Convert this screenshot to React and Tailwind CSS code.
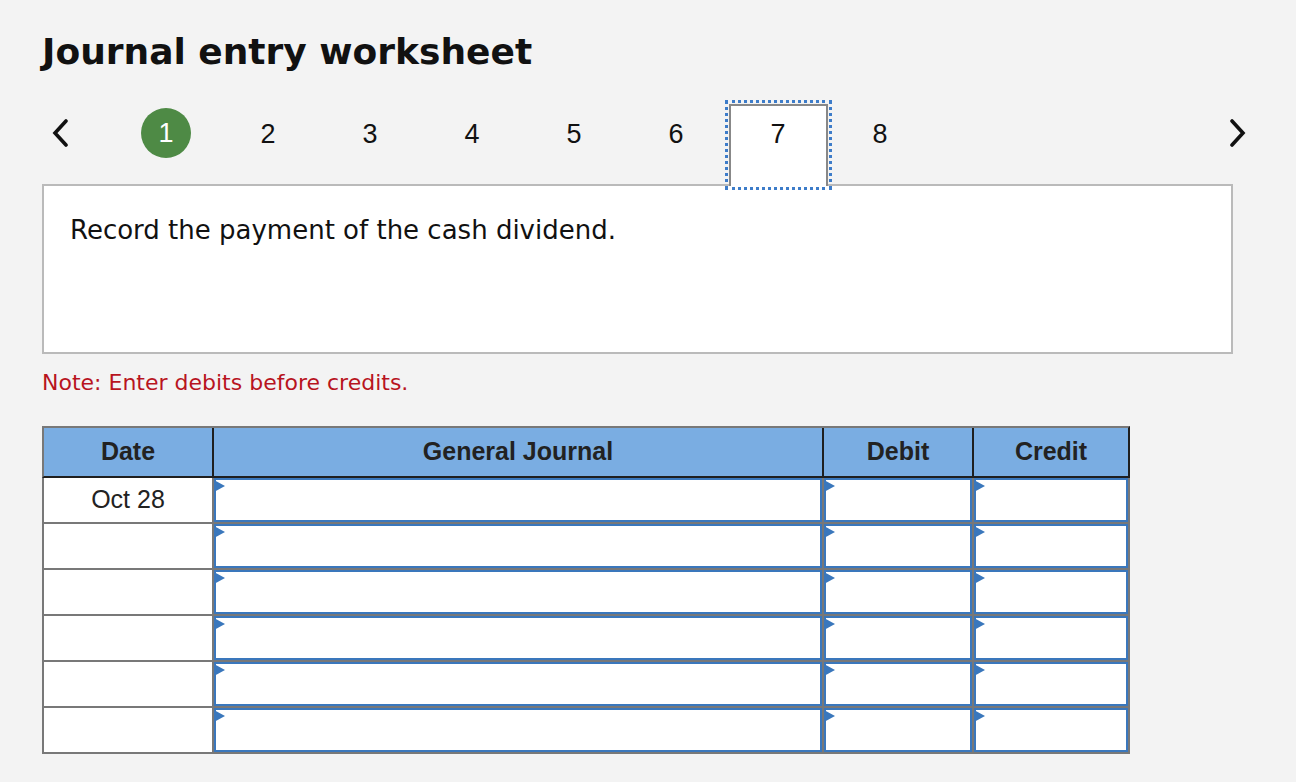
import React from "react";

const TABS = [1, 2, 3, 4, 5, 6, 7, 8];
const ROWS = ["Oct 28", "", "", "", "", ""];

function Chevron({ dir }) {
  // simple stroke chevron, 16x28
  const pts = dir === "left" ? "14,2 3,14 14,26" : "2,2 13,14 2,26";
  return (
    <svg width="16" height="28" viewBox="0 0 16 28" fill="none">
      <polyline points={pts} stroke="#111" strokeWidth="3.6" strokeLinecap="round" strokeLinejoin="miter" />
    </svg>
  );
}

function InputCell() {
  return (
    <div className="relative h-[44px] bg-white border-2 border-[#3a77bc]">
      <svg className="absolute left-[-2px] top-0" width="11" height="12" viewBox="0 0 11 12">
        <polygon points="0,0 11,6 0,12" fill="#3a77bc" />
      </svg>
    </div>
  );
}

export default function App() {
  return (
    <div className="min-h-screen bg-[#f3f3f3] px-[42px] pt-[30px] text-[#111]" style={{ fontFamily: '"DejaVu Sans", Verdana, sans-serif' }}>
      <h1 className="text-[36px] leading-[44px] font-bold text-[#111]">Journal entry worksheet</h1>

      {/* step tabs */}
      <div className="mt-[30px] h-[80px] w-[1204px] flex items-start" style={{ fontFamily: '"Liberation Sans", Arial, sans-serif' }}>
        <div className="w-[73px] pl-[10px] pt-[15px]">
          <Chevron dir="left" />
        </div>
        {TABS.map((n) => (
          <div key={n} className="w-[102px] h-[82px] flex justify-center">
            {n === 1 ? (
              <div className="mt-[4px] w-[50px] h-[50px] rounded-full bg-[#4e8a45] text-white flex items-center justify-center text-[27px] leading-[30px]">
                1
              </div>
            ) : n === 7 ? (
              <div className="relative z-10 w-[99px] h-[82px] bg-white border-2 border-b-0 border-[#888] outline-[3px] outline-dotted outline-[#3d7cc9] outline-offset-[1px] flex justify-center pt-[13px] text-[27px] leading-[30px]">
                7
              </div>
            ) : (
              <div className="pt-[15px] text-[27px] leading-[30px]">{n}</div>
            )}
          </div>
        ))}
        <div className="flex-1" />
        <div className="pt-[15px]">
          <Chevron dir="right" />
        </div>
      </div>

      {/* question box */}
      <div className="w-[1191px] h-[170px] bg-white border-2 border-[#bababa] pl-[26px] pt-[28px]">
        <p className="text-[26px] leading-[32px] text-[#111]">Record the payment of the cash dividend.</p>
      </div>

      <p className="mt-[15px] text-[22px] leading-[28px] text-[#b8141e]">Note: Enter debits before credits.</p>

      {/* journal table */}
      <div className="mt-[29px] w-[1088px]" style={{ fontFamily: '"Liberation Sans", Arial, sans-serif' }}>
        <div className="grid grid-cols-[168px_608px_148px_154px] gap-x-[2px] bg-[#1f1f1f] border-t-2 border-l-2 border-t-[#787878] border-l-[#787878] border-r-2 border-b-2 border-r-[#1f1f1f] border-b-[#1f1f1f]">
          {["Date", "General Journal", "Debit", "Credit"].map((h) => (
            <div key={h} className="h-[48px] bg-[#7aade2] flex items-center justify-center text-[25px] font-bold text-[#222]">
              {h}
            </div>
          ))}
        </div>
        <div className="grid grid-cols-[168px_608px_148px_154px] gap-[2px] bg-[#787878] border-2 border-t-0 border-[#787878]">
          {ROWS.map((d, i) => (
            <React.Fragment key={i}>
              <div className="h-[44px] bg-white flex items-center justify-center text-[25px] text-[#222]">{d}</div>
              <InputCell />
              <InputCell />
              <InputCell />
            </React.Fragment>
          ))}
        </div>
      </div>
    </div>
  );
}
